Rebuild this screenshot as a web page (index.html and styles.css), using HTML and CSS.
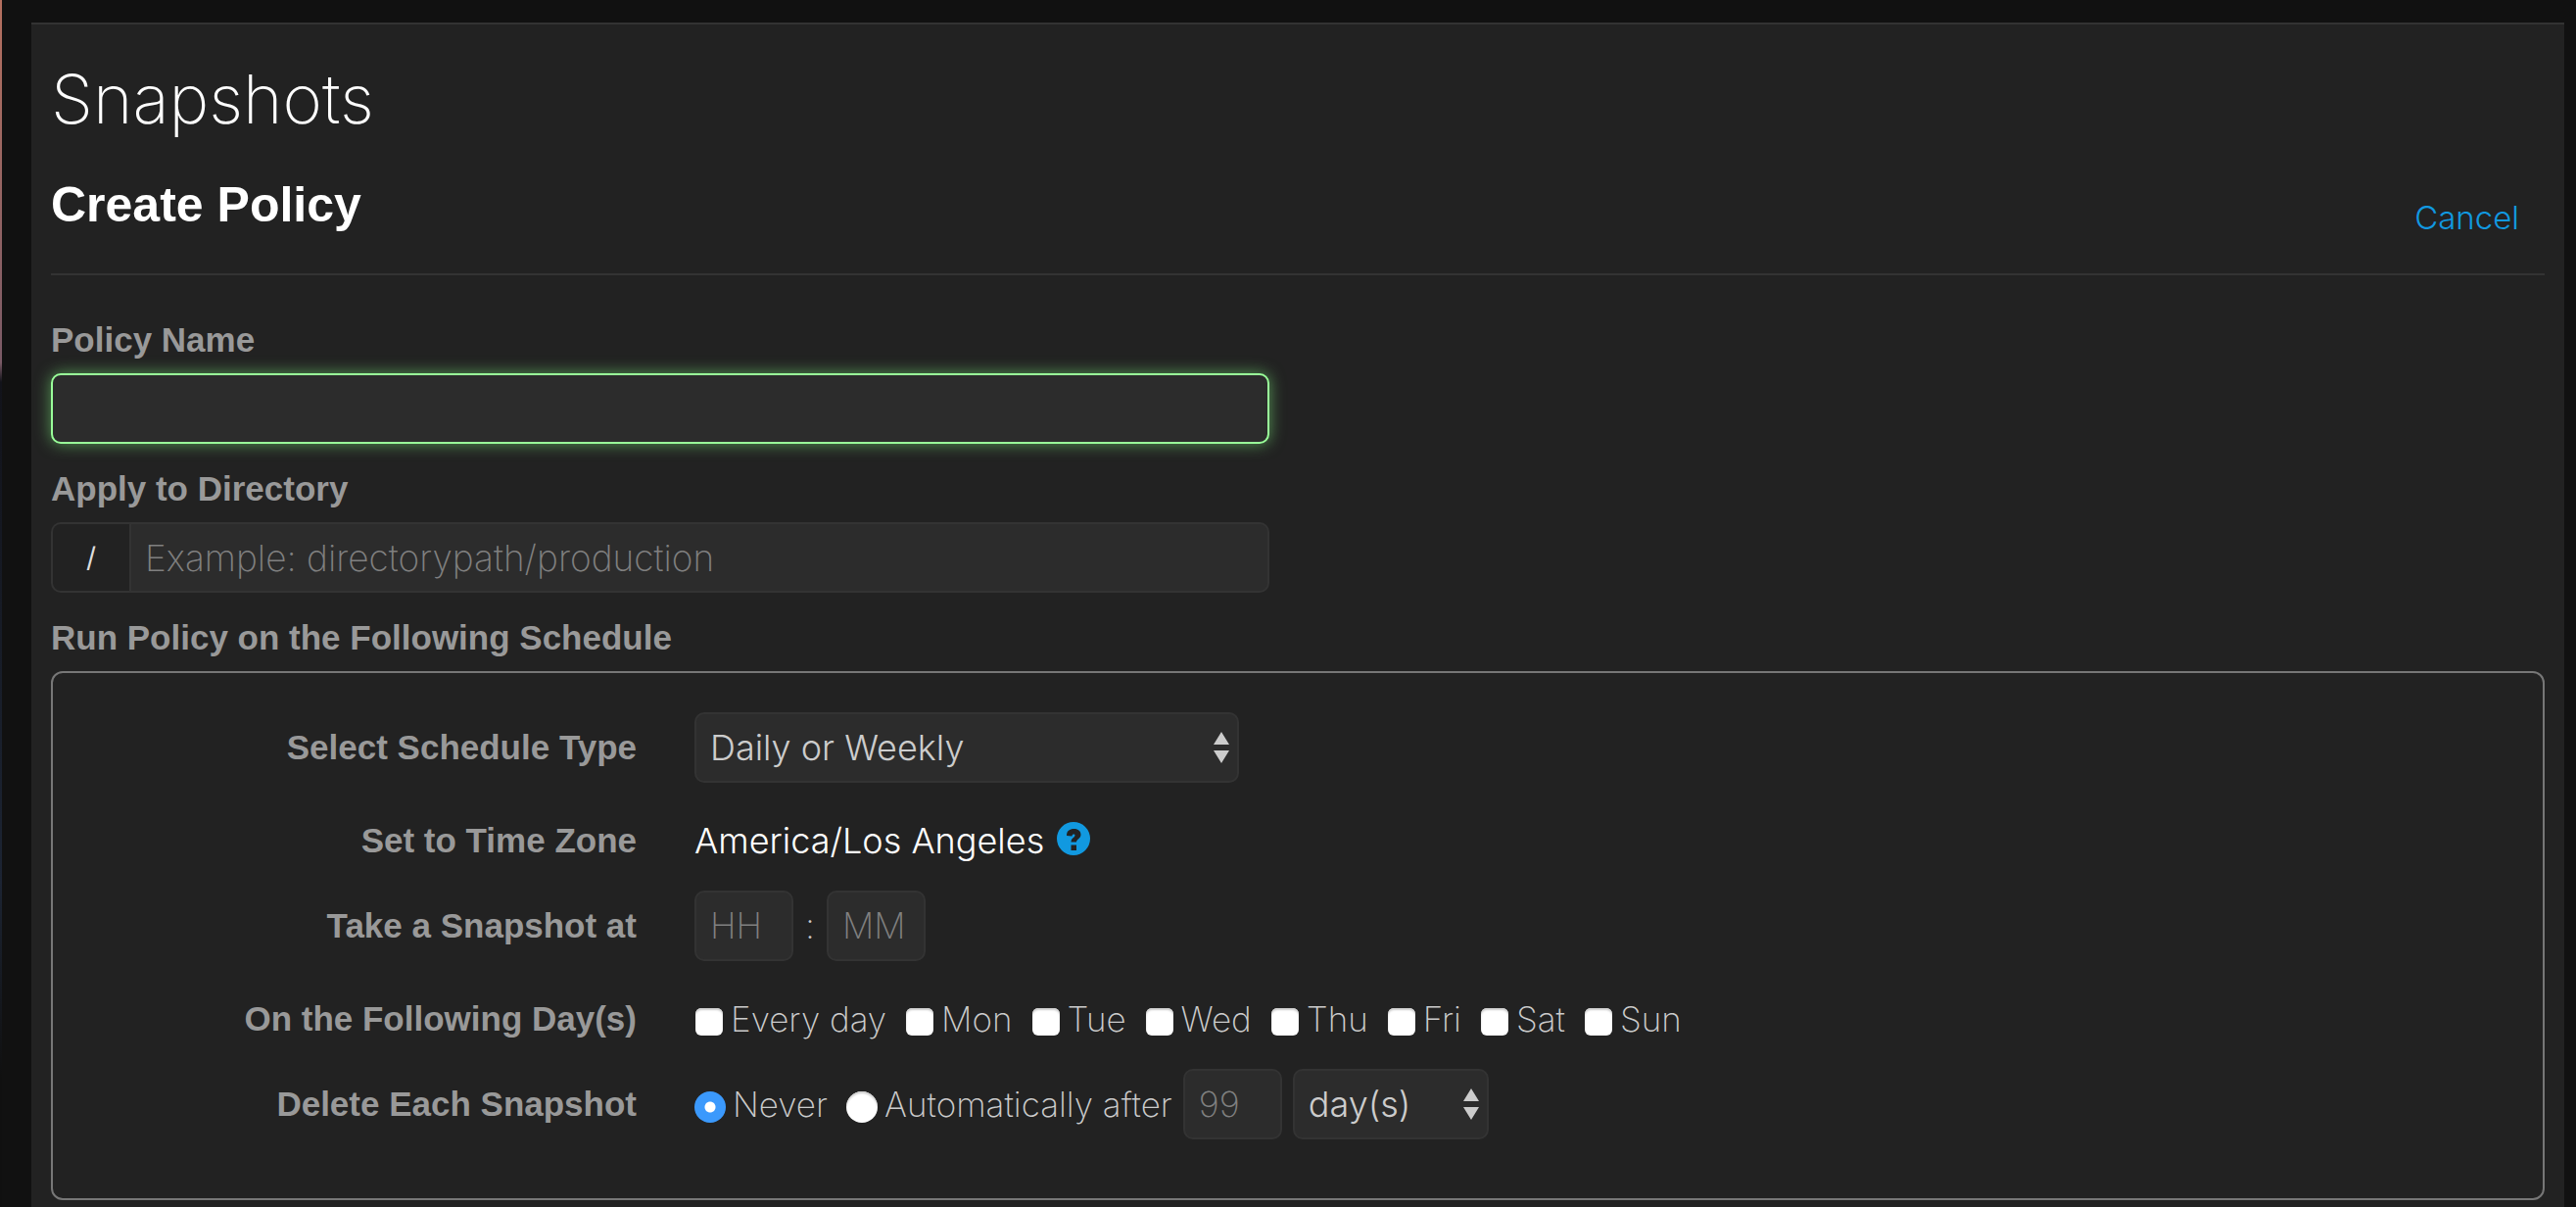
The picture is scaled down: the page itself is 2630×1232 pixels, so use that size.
FILE: index.html
```html
<!DOCTYPE html>
<html lang="en">
<head>
<meta charset="utf-8">
<meta name="viewport" content="width=device-width, initial-scale=1">
<title>Snapshots - Create Policy</title>
<link rel="stylesheet" href="styles.css">
</head>
<body>
<main class="panel">
  <h1 class="page-title">Snapshots</h1>
  <header class="section-head">
    <h2 class="section-title">Create Policy</h2>
    <a class="cancel" href="#">Cancel</a>
  </header>
  <form class="form">
    <label class="label" for="name">Policy Name</label>
    <input class="control wide active" id="name" type="text">

    <label class="label" for="dir">Apply to Directory</label>
    <div class="input-group wide">
      <span class="addon">/</span>
      <input class="control group-input" id="dir" type="text" placeholder="Example: directorypath/production">
    </div>

    <div class="label" id="schedule">Run Policy on the Following Schedule</div>
    <div class="schedule" role="group" aria-labelledby="schedule">
      <div class="row">
        <label class="row-label" for="type">Select Schedule Type</label>
        <div class="row-value">
          <div class="select type">
            <select class="control" id="type"><option>Daily or Weekly</option></select>
            <svg class="arrows" viewBox="0 0 16 32" aria-hidden="true"><path d="M8 0l8 13H0zM0 19h16L8 32z"/></svg>
          </div>
        </div>
      </div>
      <div class="row text-row">
        <div class="row-label">Set to Time Zone</div>
        <div class="row-value zone">
          <span>America/Los Angeles</span>
          <svg class="help" viewBox="0 0 34 34" role="img" aria-label="Help"><circle cx="17" cy="17" r="17"/><path class="mark" d="M10 14C10 9 13 7 17.500 7C22 7 24.500 9.500 24.500 13C24.500 17 20 17.500 20 20.500H14.500C14.500 16 18.500 16 18.500 13.500C18.500 12 15.500 12 15.500 14.500ZM14.500 23.500H20V29H14.500Z"/></svg>
        </div>
      </div>
      <div class="row">
        <label class="row-label" for="hour">Take a Snapshot at</label>
        <div class="row-value time">
          <input class="control small" id="hour" type="text" placeholder="HH">
          <span class="colon">:</span>
          <input class="control small" type="text" placeholder="MM" aria-label="Minutes">
        </div>
      </div>
      <div class="row text-row">
        <div class="row-label">On the Following Day(s)</div>
        <div class="row-value choices">
          <label class="choice"><input type="checkbox">Every day</label>
          <label class="choice"><input type="checkbox">Mon</label>
          <label class="choice"><input type="checkbox">Tue</label>
          <label class="choice"><input type="checkbox">Wed</label>
          <label class="choice"><input type="checkbox">Thu</label>
          <label class="choice"><input type="checkbox">Fri</label>
          <label class="choice"><input type="checkbox">Sat</label>
          <label class="choice"><input type="checkbox">Sun</label>
        </div>
      </div>
      <div class="row">
        <div class="row-label">Delete Each Snapshot</div>
        <div class="row-value delete">
          <div class="choices">
            <label class="choice"><input type="radio" name="delete" checked>Never</label>
            <label class="choice"><input type="radio" name="delete">Automatically after</label>
          </div>
          <input class="control small" type="text" placeholder="99" aria-label="Amount">
          <div class="select unit">
            <select class="control" aria-label="Unit"><option>day(s)</option></select>
            <svg class="arrows" viewBox="0 0 16 32" aria-hidden="true"><path d="M8 0l8 13H0zM0 19h16L8 32z"/></svg>
          </div>
        </div>
      </div>
    </div>
  </form>
</main>
</body>
</html>
```
FILE: styles.css
```css
* { box-sizing: border-box; }

body {
  display: flex;
  min-height: 100vh;
  margin: 0;
  padding: 23px 12px 0 32px;
  background: linear-gradient(#b5705f 0, #7a5a66 370px, #12131a 390px, #1c2433 900px, #101010 1100px) left top / 2px 100% no-repeat, #111;
  color: #ccc;
  font: 200 36px/42px Inter, "Liberation Sans", sans-serif;
}

.panel {
  flex: 1;
  min-width: 0;
  padding: 36px 20px 7px;
  border-top: 2px solid #333;
  background: #222;
}

.page-title {
  margin: 0 0 38px;
  color: #fff;
  font-size: 69px;
  font-weight: 200;
  line-height: 80px;
}

.section-head {
  display: flex;
  align-items: flex-end;
  justify-content: space-between;
  padding: 0 26px 40px 0;
  border-bottom: 2px solid #333;
}

.section-title {
  margin: 0;
  color: #fff;
  font: 700 50px/60px "Liberation Sans", Arial, sans-serif;
}

.cancel {
  color: #1199e0;
  font-size: 33px;
  font-weight: 300;
  line-height: 34px;
  text-decoration: none;
}

.form { padding-top: 20px; }

.label,
.row-label {
  color: #999;
  font: 700 35px/44px "Liberation Sans", Arial, sans-serif;
}

.label {
  display: block;
  margin: 24px 0 12px;
}

.wide {
  width: 100%;
  max-width: 1244px;
}

.control {
  display: block;
  height: 72px;
  padding: 0 14px;
  border: 2px solid #333;
  border-radius: 10px;
  outline: 0;
  background: #2c2c2c;
  color: #ccc;
  font: inherit;
}

.control::placeholder {
  color: #808080;
  opacity: 1;
}

.active {
  border-color: #99ff99;
  box-shadow: 0 0 16px rgba(120, 230, 120, .6);
}

.input-group { display: flex; }

.addon {
  display: flex;
  align-items: center;
  justify-content: center;
  width: 80px;
  border: 2px solid #333;
  border-right: 0;
  border-radius: 10px 0 0 10px;
  color: #ddd;
  font-size: 28px;
  font-weight: 400;
}

.group-input {
  flex: 1;
  min-width: 0;
  border-radius: 0 10px 10px 0;
  font-size: 37px;
}

.schedule {
  padding: 40px 0 60px;
  border: 2px solid #777;
  border-radius: 12px;
}

.row {
  display: grid;
  grid-template-columns: 596px 1fr;
  column-gap: 59px;
  align-items: center;
}

.text-row { margin: 38px 0 30px; }

.text-row .row-label { line-height: 42px; }

.row-label { text-align: right; }

.row-value {
  display: flex;
  align-items: center;
}

.select {
  position: relative;
}

.select .control {
  width: 100%;
  appearance: none;
  font-weight: 300;
}

.type { width: 556px; }
.unit { width: 200px; }

.arrows {
  position: absolute;
  top: 20px;
  right: 10px;
  width: 16px;
  height: 32px;
  fill: #ccc;
  pointer-events: none;
}

.zone {
  gap: 13px;
  color: #fff;
  font-weight: 300;
}

.help {
  width: 34px;
  height: 34px;
  margin-bottom: 4px;
  fill: #1199e0;
}

.mark { fill: #222; }

.small { width: 101px; }

.colon {
  width: 34px;
  text-align: center;
}

.choices {
  display: flex;
  gap: 19px;
  font-size: 35px;
}

.choice {
  display: flex;
  align-items: center;
  gap: 7px;
}

.choice input {
  flex: none;
  width: 28px;
  height: 28px;
  margin: 6px 1px 0;
  appearance: none;
  border-radius: 6px;
  background: #fff;
  box-shadow: inset 0 2px 2px #ccc;
}

.choice input[type="radio"] {
  width: 32px;
  height: 32px;
  margin: 6px 0 0;
  border-radius: 50%;
}

.choice input[type="radio"]:checked {
  background: radial-gradient(circle, #fff 5px, #3b99fc 6px);
  box-shadow: none;
}

.delete { gap: 11px; }
```
